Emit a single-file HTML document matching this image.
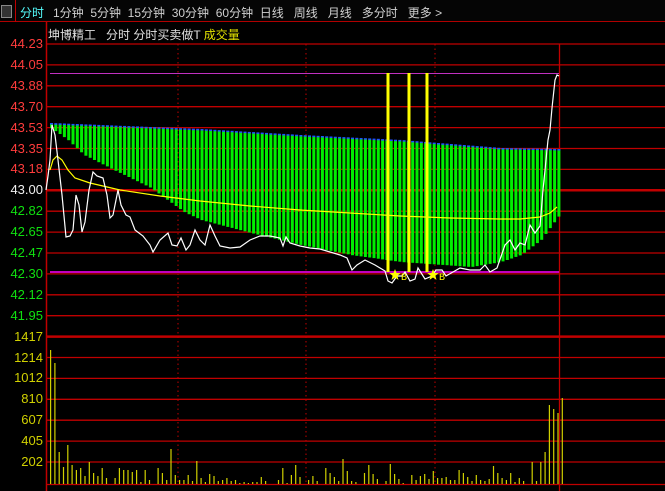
<!DOCTYPE html>
<html><head><meta charset="utf-8"><style>
html,body{margin:0;padding:0;background:#000;width:665px;height:491px;overflow:hidden}
body{position:relative;font-family:"Liberation Sans","Noto Sans CJK SC",sans-serif}
#tb{position:absolute;left:0;top:0;width:665px;height:21px;background:#050505;border-bottom:1px solid #b00000}
#tb .ic{position:absolute;left:1px;top:5px;width:9px;height:11px;border:1px solid #888;background:#333}
#tb .sep{position:absolute;left:15px;top:0;width:1px;height:22px;background:#c00000}
#tb .t{position:absolute;top:4px;font-size:12px;color:#d0d0d0;white-space:nowrap}
#sub{position:absolute;left:48px;top:26px;font-size:12px;color:#e0e0e0;white-space:nowrap}
.lab{position:absolute;right:622px;font-size:13px;line-height:14px;text-align:right}
svg{position:absolute;left:0;top:0}
</style></head><body>
<div id="tb"><div class="ic"></div><div class="sep"></div>
<div class="t" style="left:20px;color:#5ff">分时</div>
<div class="t" style="left:53px">1分钟&nbsp;&nbsp;5分钟&nbsp;&nbsp;15分钟&nbsp;&nbsp;30分钟&nbsp;&nbsp;60分钟&nbsp;&nbsp;日线&nbsp;&nbsp;&nbsp;周线&nbsp;&nbsp;&nbsp;月线&nbsp;&nbsp;&nbsp;多分时&nbsp;&nbsp;&nbsp;更多 &gt;</div>
</div>
<div id="sub">坤博精工&nbsp;&nbsp;&nbsp;分时 分时买卖做T <span style="color:#e0e000">成交量</span></div>
<div id="labs"></div>
<svg id="s" width="665" height="491"></svg>
<script>
(function(){
var L=[["44.23","#ff3c3c"],["44.05","#ff3c3c"],["43.88","#ff3c3c"],["43.70","#ff3c3c"],["43.53","#ff3c3c"],["43.35","#ff3c3c"],["43.18","#ff3c3c"],["43.00","#f0f0f0"],["42.82","#10e010"],["42.65","#10e010"],["42.47","#10e010"],["42.30","#10e010"],["42.12","#10e010"],["41.95","#10e010"],["1417","#d0d000"],["1214","#d0d000"],["1012","#d0d000"],["810","#d0d000"],["607","#d0d000"],["405","#d0d000"],["202","#d0d000"]];
var h="",s="";
for(var i=0;i<L.length;i++){var y=44+i*20.9;h+='<div class="lab" style="top:'+(y-7)+'px;color:'+L[i][1]+'">'+L[i][0]+'</div>';
 var w=(i==7||i==14)?2.5:1.3;s+='<line x1="46" x2="665" y1="'+y+'" y2="'+y+'" stroke="#c00000" stroke-width="'+w+'"/>';}
s+='<line x1="46" x2="665" y1="484.5" y2="484.5" stroke="#c00000" stroke-width="1.3"/>';
document.getElementById("labs").innerHTML=h;
[178,306,435].forEach(function(x){s+='<line x1="'+x+'" x2="'+x+'" y1="44" y2="485" stroke="#c00000" stroke-dasharray="1.5,3"/>'});
s+='<line x1="46.5" x2="46.5" y1="22" y2="491" stroke="#c00000" stroke-width="1.5"/><line x1="559.5" x2="559.5" y1="44" y2="491" stroke="#c00000" stroke-width="1.3"/>';
s+='<line x1="50" x2="559" y1="73.5" y2="73.5" stroke="#c030c0"/><line x1="50" x2="559" y1="272" y2="272" stroke="#ff00ff" stroke-width="1.5"/>';
function interp(pts,x){for(var k=1;k<pts.length;k++){if(x<=pts[k][0]){var a=pts[k-1],b=pts[k];return a[1]+(b[1]-a[1])*(x-a[0])/(b[0]-a[0]);}}return pts[pts.length-1][1];}
var tp=[[50,124],[100,126],[200,130],[300,136],[400,141],[500,149],[560,150]];
var bt=[[50,128],[67,140],[83,155],[117,172],[150,188],[183,212],[200,220],[250,233],[300,245],[350,255],[400,262],[470,267],[500,262],[520,255],[540,240],[560,213]];
for(var x=50;x<=558;x+=4.3){var t=interp(tp,x),b=interp(bt,x);
 s+='<rect x="'+x.toFixed(1)+'" y="'+t.toFixed(1)+'" width="3" height="'+(b-t).toFixed(1)+'" fill="#00ee00"/><rect x="'+x.toFixed(1)+'" y="'+(t-1).toFixed(1)+'" width="3" height="1.5" fill="#2050ff"/>';}
var avg="50,170 53,160 57,156 62,160 68,170 75,178 90,183 120,190 160,196 200,201 250,206 300,210 350,213 400,216 450,218 500,219 520,219 540,217 550,213 557,207";
s+='<polyline points="'+avg+'" fill="none" stroke="#ffff00" stroke-width="1.2"/>';
var pr="46,190 48,176 50,160 52,125 55,135 58,160 62,195 66,237 70,236 73,230 76,195 79,205 82,232 85,222 89,190 93,172 97,176 103,178 107,195 110,218 113,215 118,190 121,205 126,215 130,217 135,230 143,236 150,245 153,252 160,240 168,233 172,245 177,246 181,238 186,250 190,245 195,230 200,240 205,245 210,225 215,236 220,246 230,248 240,247 250,240 260,236 270,236 280,238 283,246 286,237 290,243 300,246 310,248 320,249 330,252 340,255 347,258 352,270 357,265 365,260 375,265 380,268 385,271 388,281 392,283 397,276 402,276 405,272 410,281 415,279 418,268 425,279 432,276 436,270 442,270 446,276 460,268 470,270 480,270 485,265 490,272 497,268 505,245 510,240 515,250 520,243 525,245 530,225 535,233 540,226 543,190 545,170 548,140 550,130 552,108 555,80 557,75 559,76";
s+='<polyline points="'+pr+'" fill="none" stroke="#ffffff" stroke-width="1.2"/>';
[388,409,427].forEach(function(x){s+='<rect x="'+(x-1.5)+'" y="73" width="3" height="199" fill="#ffff00"/>'});
function star(cx,cy,r){var p=[];for(var k=0;k<10;k++){var a=-Math.PI/2+k*Math.PI/5,rr=k%2?r*0.42:r;p.push((cx+rr*Math.cos(a)).toFixed(1)+","+(cy+rr*Math.sin(a)).toFixed(1));}return '<polygon points="'+p.join(" ")+'" fill="#ffff00"/>';}
s+=star(395,275,6)+star(433,275,6);
s+='<text x="401" y="280" font-size="10" fill="#ffff00" font-family="Liberation Mono">B</text><text x="439" y="280" font-size="10" fill="#ffff00" font-family="Liberation Mono">B</text>';
var vol=[350,363,452,467,445,465,470,468,476,462,473,476,468,478,484,478,468,470,470,472,470,482,470,480,484,468,473,480,449,475,480,480,475,481,461,478,482,474,476,481,480,478,481,480,483,482,483,482,482,477,481,484,484,480,468,483,475,465,477,484,480,476,481,484,468,473,477,481,459,471,481,482,484,473,465,474,479,485,481,464,474,479,483,485,475,480,476,474,479,471,478,478,477,480,480,470,473,477,481,475,480,481,479,466,473,478,480,473,482,478,481,485,462,481,462,452,405,409,413,398];
for(var k=0;k<vol.length;k++){var vx=50+k*4.3;s+='<rect x="'+vx.toFixed(1)+'" y="'+vol[k]+'" width="1.2" height="'+(484-vol[k])+'" fill="#d0d000"/>';}
document.getElementById("s").innerHTML=s;
})();
</script>
</body></html>
